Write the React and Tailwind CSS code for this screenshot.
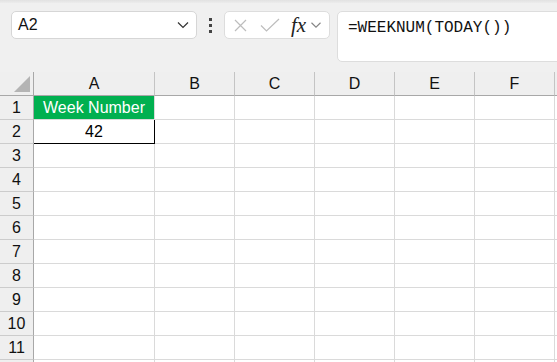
import React from 'react';

const cols = ['A', 'B', 'C', 'D', 'E', 'F', 'G'];
const rows = [1, 2, 3, 4, 5, 6, 7, 8, 9, 10, 11, 12];

function Chevron({ className }) {
  return (
    <svg width="12" height="8" viewBox="0 0 12 8" className={className}>
      <path d="M1 1.5 L6 6.5 L11 1.5" fill="none" stroke="#333" strokeWidth="1.2" />
    </svg>
  );
}

function Cell({ row, col }) {
  const wide = col === 'A';
  let cls = 'border-r border-b border-[#dadada] h-6 flex items-center justify-center text-[16px] text-black';
  let text = '';
  if (row === 1 && col === 'A') {
    cls = 'border-r border-b border-[#dadada] h-6 flex items-center justify-center text-[16px] bg-[#00b050] text-white';
    text = 'Week Number';
  }
  if (row === 2 && col === 'A') {
    cls = 'border-r border-b border-black h-6 flex items-center justify-center text-[16px] text-black';
    text = '42';
  }
  return <div className={cls + (wide ? ' w-[121px]' : ' w-[80px]')}>{text}</div>;
}

export default function App() {
  return (
    <div className="w-[557px] h-[362px] overflow-hidden bg-[#f0f0f0] flex flex-col" style={{ fontFamily: '"Liberation Sans", Arial, sans-serif' }}>
      {/* toolbar */}
      <div className="h-[72px] shrink-0 flex flex-col">
        <div className="h-[3px] bg-gradient-to-b from-[#e2e2e2] to-[#ececec]" />
        <div className="flex items-start pt-2 pl-[11px]">
          <div className="w-[186px] h-7 bg-white border border-[#d6d6d6] rounded-[5px] flex items-center justify-between pl-[6px] pr-[7px]">
            <span className="text-[16px] text-[#111]">A2</span>
            <Chevron />
          </div>
          <div className="w-[27px] h-7 flex flex-col items-center justify-center gap-[3px]">
            <span className="w-[3px] h-[3px] bg-[#444]" />
            <span className="w-[3px] h-[3px] bg-[#444]" />
            <span className="w-[3px] h-[3px] bg-[#444]" />
          </div>
          <div className="w-[106px] h-7 bg-white border border-[#dddddd] rounded-[5px] flex items-center pl-[9px]">
            <svg width="13" height="13" viewBox="0 0 13 13">
              <path d="M1 1 L12 12 M12 1 L1 12" stroke="#bdbdbd" strokeWidth="1.2" fill="none" />
            </svg>
            <svg width="20" height="14" viewBox="0 0 20 14" className="ml-[13px]">
              <path d="M1 7.5 L6.5 13 L19 1" stroke="#bdbdbd" strokeWidth="1.2" fill="none" />
            </svg>
            <span className="ml-[11px] text-[21px] italic text-[#222] leading-none" style={{ fontFamily: '"Liberation Serif", serif' }}>fx</span>
            <Chevron className="ml-[4px] scale-90 opacity-60" />
          </div>
          <div className="ml-[7px] flex-1 -mr-3 h-[51px] bg-white border border-[#dddddd] rounded-[5px] pl-[10px] pt-[3px]">
            <span className="text-[16px] text-[#111]" style={{ fontFamily: '"Liberation Mono", monospace' }}>=WEEKNUM(TODAY())</span>
          </div>
        </div>
      </div>

      {/* sheet */}
      <div className="flex flex-col bg-white">
        <div className="flex h-6 bg-[#efefef]">
          <div className="w-[34px] shrink-0 border-r border-b border-[#a8a8a8] flex items-end justify-end pb-[3px] pr-[3px]">
            <svg width="16" height="16" viewBox="0 0 16 16">
              <path d="M16 0 L16 16 L0 16 Z" fill="#b4b4b4" />
            </svg>
          </div>
          {cols.map((c) => (
            <div
              key={c}
              className={(c === 'A' ? 'w-[121px]' : 'w-[80px]') + ' shrink-0 border-r border-r-[#c4c4c4] border-b border-b-[#a8a8a8] flex items-center justify-center text-[16px] text-[#111]'}
            >
              {c === 'G' ? '' : c}
            </div>
          ))}
        </div>
        {rows.map((r) => (
          <div key={r} className="flex h-6">
            <div className="w-[34px] shrink-0 bg-[#efefef] border-r border-r-[#a8a8a8] border-b border-b-[#cccccc] flex items-center justify-center text-[16px] text-[#111]">
              {r < 12 ? r : ''}
            </div>
            {cols.map((c) => (
              <div key={c} className="shrink-0">
                <Cell row={r} col={c} />
              </div>
            ))}
          </div>
        ))}
      </div>
    </div>
  );
}
